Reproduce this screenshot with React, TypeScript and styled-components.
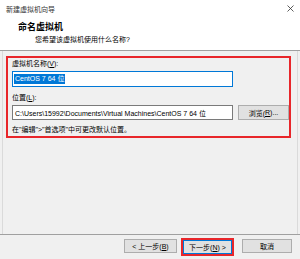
import React from "react";
import styled, { createGlobalStyle } from "styled-components";

const Global = createGlobalStyle`
  html, body { margin: 0; padding: 0; background: #f0f0f0; }
  * { box-sizing: border-box; }
`;

const Window = styled.div`
  width: 300px;
  height: 259px;
  display: flex;
  flex-direction: column;
  background: #f0f0f0;
  font-family: "Liberation Sans", "Noto Sans CJK SC", sans-serif;
  font-size: 7px;
  color: #000;
  overflow: hidden;
`;

const TitleBar = styled.div`
  height: 17px;
  flex: none;
  display: flex;
  align-items: center;
  justify-content: space-between;
  padding: 0 6px 0 6px;
  background: #fff;
  color: #333;
`;

const Header = styled.div`
  height: 34px;
  flex: none;
  background: #fff;
  padding: 5px 0 0 18px;
  border-bottom: 1px solid #a0a0a0;
`;

const Heading = styled.div`
  font-size: 9px;
  font-weight: bold;
  line-height: 11px;
`;

const Subtitle = styled.div`
  line-height: 10px;
  padding: 2px 0 0 17px;
`;

const Body = styled.div`
  flex: 1;
  margin: 0 2px;
  padding: 5px 0 0 3px;
  border-left: 1px solid #dadada;
  border-right: 1px solid #dadada;
`;

const Marked = styled.div`
  border: 2px solid #e8262a;
`;

const Group = styled(Marked)`
  width: 285px;
  height: 82px;
  padding: 1px 0 0 4px;
`;

const Label = styled.div<{ $gap: number }>`
  line-height: 9px;
  height: 9px;
  margin-top: ${(p) => p.$gap}px;
`;

const Row = styled.div`
  display: flex;
  gap: 5px;
  margin-top: 3px;
  align-items: stretch;
`;

const Input = styled.div<{ $focus?: boolean; $h: number }>`
  width: 221px;
  height: ${(p) => p.$h}px;
  background: #fff;
  border: 1px solid ${(p) => (p.$focus ? "#0078d7" : "#7a7a7a")};
  display: flex;
  align-items: center;
  padding-left: 1px;
  white-space: nowrap;
  overflow: hidden;
  margin-top: 3px;
`;

const PathInput = styled(Input)`
  margin-top: 0;
  padding-left: 2px;
`;

const Selected = styled.span`
  background: #0078d7;
  color: #fff;
  line-height: 10px;
  padding: 0 1px;
`;

const Button = styled.div<{ $default?: boolean; $w?: number }>`
  width: ${(p) => p.$w ?? 52}px;
  height: 14px;
  background: #e1e1e1;
  border: 1px solid ${(p) => (p.$default ? "#0078d7" : "#adadad")};
  display: flex;
  align-items: center;
  justify-content: center;
  white-space: nowrap;
`;

const BrowseButton = styled(Button)`
  height: 15px;
`;

const Footer = styled.div`
  height: 25px;
  flex: none;
  border-top: 1px solid #a0a0a0;
  display: flex;
  align-items: flex-start;
  justify-content: flex-end;
  padding: 4px 8px 0 0;
  gap: 3px;
`;

const BackButton = styled(Button)`
  margin-right: 1px;
`;

const NextMark = styled(Marked)`
  padding: 0;
  margin-top: -1px;
  margin-right: 5px;
`;

const Close = () => (
  <svg width="7" height="7" viewBox="0 0 7 7">
    <path d="M0.5 0.5 L6.5 6.5 M6.5 0.5 L0.5 6.5" stroke="#333" strokeWidth="0.8" />
  </svg>
);

export default function App() {
  return (
    <>
      <Global />
      <Window>
        <TitleBar>
          <span>新建虚拟机向导</span>
          <Close />
        </TitleBar>
        <Header>
          <Heading>命名虚拟机</Heading>
          <Subtitle>您希望该虚拟机使用什么名称?</Subtitle>
        </Header>
        <Body>
          <Group>
            <Label $gap={0}>
              虚拟机名称(<u>V</u>):
            </Label>
            <Input $focus $h={16}>
              <Selected>CentOS 7 64 位</Selected>
            </Input>
            <Label $gap={6}>
              位置(<u>L</u>):
            </Label>
            <Row>
              <PathInput $h={15}>
                C:\Users\15992\Documents\Virtual Machines\CentOS 7 64 位
              </PathInput>
              <BrowseButton $w={51}>
                浏览(<u>R</u>)...
              </BrowseButton>
            </Row>
            <Label $gap={5}>在"编辑"&gt;"首选项"中可更改默认位置。</Label>
          </Group>
        </Body>
        <Footer>
          <BackButton $w={53}>
            &lt; 上一步(<u>B</u>)
          </BackButton>
          <NextMark>
            <Button $default $w={49}>
              下一步(<u>N</u>) &gt;
            </Button>
          </NextMark>
          <Button $w={50}>取消</Button>
        </Footer>
      </Window>
    </>
  );
}
